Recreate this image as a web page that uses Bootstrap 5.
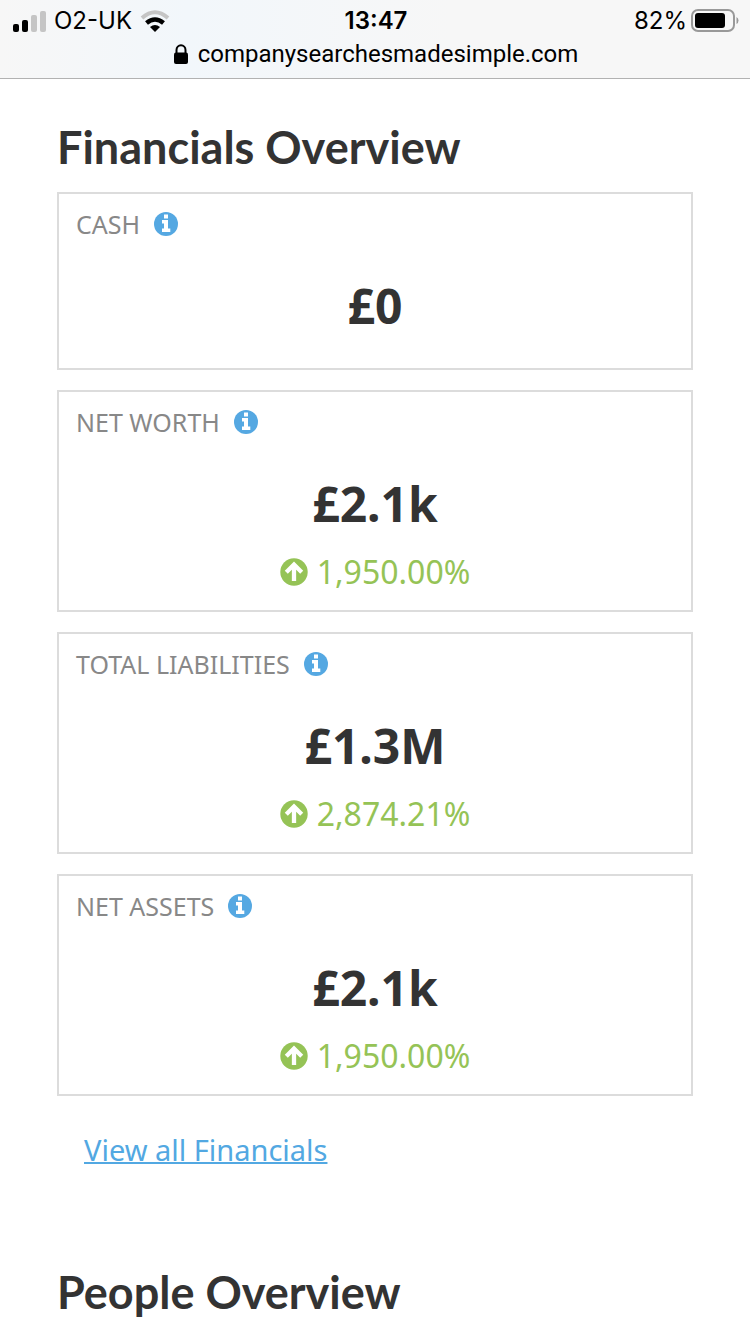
<!DOCTYPE html>
<html lang="en">
<head>
<meta charset="utf-8">
<meta name="viewport" content="width=device-width, initial-scale=1">
<title>Financials Overview</title>
<link href="https://cdn.jsdelivr.net/npm/bootstrap@5.3.0/dist/css/bootstrap.min.css" rel="stylesheet">
<style>
body{font-family:"Noto Sans",sans-serif;color:#333;background:#fff}
.statusbar{background:linear-gradient(90deg,#f7f7f7,#f2f7fb 25%,#f7f7f7 60%);border-bottom:1px solid #b2b2b2;font-family:Inter,sans-serif;color:#000;padding:7px 11px 10px 13px}
.bar-row{font-size:24px;line-height:28px}
.bar-time{font-weight:600}
.address{font-family:Roboto,sans-serif;font-size:24px;line-height:28px;gap:10px;padding-top:5px}
.page{padding:40px 57px 0}
.heading{font-family:Lato,sans-serif;font-size:45px;line-height:56px;font-weight:700;margin:0 0 17px}
.stat{border:2px solid #dcdcdc;padding:14px 17px 20px;margin-bottom:20px}
.stat-label{font-size:25px;line-height:32px;color:#888;gap:14px;font-weight:400;margin:0}
.info-button{border:0;padding:0;background:none;line-height:0}
.stat-value{font-size:48px;line-height:60px;font-weight:700;margin:36px 0 12px}
.has-change .stat-value{margin-bottom:18px}
.stat-change{font-size:32px;line-height:40px;color:#95c356;gap:9px;margin:0}
.has-change{padding-bottom:18px}
.more{font-size:29px;line-height:36px;color:#52a8e2;margin:36px 27px 96px}
.more a{color:inherit;text-decoration-thickness:2px}
</style>
</head>
<body>
<svg class="d-none">
<symbol id="info" viewBox="0 0 24 24"><circle cx="12" cy="12" r="12" fill="#55a8e2"/><path fill="#fff" d="M10 2.500h4V6.500h-4zM8 8h6v8.500h2.300V20H8v-3.500h2V11.500H8z"/></symbol>
<symbol id="up" viewBox="0 0 28 28"><circle cx="14" cy="14" r="13.700" fill="#95c356"/><path fill="none" stroke="#fff" stroke-width="4.300" d="M6.300 14.300L14 6.600l7.700 7.700M14 7v16"/></symbol>
</svg>
<header class="statusbar">
<div class="bar-row row g-0 align-items-center">
<div class="col d-flex align-items-center">
<svg width="33" height="22" viewBox="0 0 33 22" aria-hidden="true"><rect y="14" width="6" height="8" rx="2"/><rect x="9" y="10" width="6" height="12" rx="2"/><g fill="#c5c5c5"><rect x="18" y="5" width="6" height="17" rx="2"/><rect x="27" y="1" width="6" height="21" rx="2"/></g></svg>
<span class="ms-2">O2-UK</span>
<svg class="ms-2" width="30" height="22" viewBox="0 0 30 22" aria-hidden="true"><g fill="none" stroke-width="4"><path stroke="#c5c5c5" d="M2 8Q15-3.500 28 8"/><path stroke="#000" stroke-width="4.500" d="M6.500 13q8.500-7 17 0"/></g><path d="M10 17q5-4 10 0l-5 5z"/></svg>
</div>
<div class="col-auto bar-time">13:47</div>
<div class="col d-flex align-items-center justify-content-end">
<span>82%</span>
<svg class="ms-1" width="48" height="24" viewBox="0 0 48 24" aria-hidden="true"><rect x="1" y="1" width="42" height="21" rx="6" fill="none" stroke="#999" stroke-width="2"/><rect x="4" y="4" width="30" height="15" rx="3"/><path fill="#999" d="M45.500 8q2 1 2 3.500t-2 3.500z"/></svg>
</div>
</div>
<div class="address d-flex justify-content-center align-items-center">
<svg width="14" height="20" viewBox="0 0 14 20" aria-hidden="true"><rect y="8.500" width="14" height="11.500" rx="2"/><path fill="none" stroke="#000" stroke-width="2" d="M2.500 9V6a4.500 4.800 0 0 1 9 0v3"/></svg>
<span>companysearchesmadesimple.com</span>
</div>
</header>
<main class="page">
<h2 class="heading">Financials Overview</h2>
<section class="stat">
<h3 class="stat-label d-flex align-items-center">CASH <button class="info-button" type="button" aria-label="About cash"><svg width="24" height="24"><use href="#info"/></svg></button></h3>
<p class="stat-value text-center">£0</p>
</section>
<section class="stat has-change">
<h3 class="stat-label d-flex align-items-center">NET WORTH <button class="info-button" type="button" aria-label="About net worth"><svg width="24" height="24"><use href="#info"/></svg></button></h3>
<p class="stat-value text-center">£2.1k</p>
<p class="stat-change d-flex justify-content-center align-items-center"><svg width="28" height="28" aria-hidden="true"><use href="#up"/></svg>1,950.00%</p>
</section>
<section class="stat has-change">
<h3 class="stat-label d-flex align-items-center">TOTAL LIABILITIES <button class="info-button" type="button" aria-label="About total liabilities"><svg width="24" height="24"><use href="#info"/></svg></button></h3>
<p class="stat-value text-center">£1.3M</p>
<p class="stat-change d-flex justify-content-center align-items-center"><svg width="28" height="28" aria-hidden="true"><use href="#up"/></svg>2,874.21%</p>
</section>
<section class="stat has-change">
<h3 class="stat-label d-flex align-items-center">NET ASSETS <button class="info-button" type="button" aria-label="About net assets"><svg width="24" height="24"><use href="#info"/></svg></button></h3>
<p class="stat-value text-center">£2.1k</p>
<p class="stat-change d-flex justify-content-center align-items-center"><svg width="28" height="28" aria-hidden="true"><use href="#up"/></svg>1,950.00%</p>
</section>
<p class="more"><a href="#">View all Financials</a></p>
<h2 class="heading">People Overview</h2>
</main>
<script src="https://cdn.jsdelivr.net/npm/bootstrap@5.3.0/dist/js/bootstrap.bundle.min.js"></script>
</body>
</html>
